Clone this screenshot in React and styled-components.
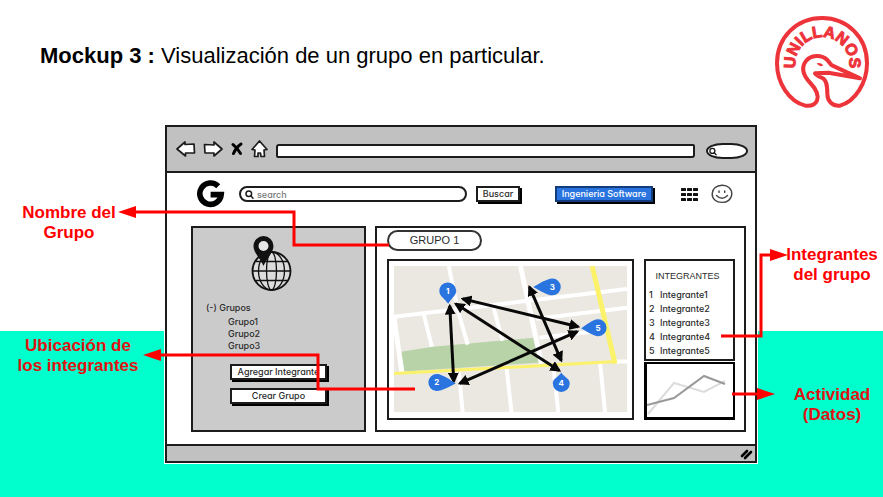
import React from 'react';
import styled, { createGlobalStyle } from 'styled-components';

const INK = '#1c1c1c';
const RED = '#ff0000';
const BLUE = '#2a74e0';

const GlobalStyle = createGlobalStyle`
  *, *::before, *::after { box-sizing: border-box; }
  body { margin: 0; background: #fff; font-family: 'Liberation Sans', Arial, sans-serif; }
  svg { display: block; flex: none; }
`;

const Slide = styled.main`
  min-height: 100vh;
  background: linear-gradient(#fff 0 66.6%, #00ffcc 66.6%);
`;

const Header = styled.header`
  display: flex;
  align-items: center;
  justify-content: space-between;
  padding-left: 40px;
`;

const Title = styled.h1`
  margin: 0;
  padding-bottom: 8px;
  font-size: 22px;
  line-height: 28px;
  font-weight: 400;
  color: #000;
`;

const Stage = styled.section`
  position: relative;
  display: grid;
  grid-template-columns: 164px minmax(0, 1fr) 125px;
  align-items: start;
  margin-top: 4px;
`;

const Notes = styled.div`
  display: flex;
  flex-direction: column;
  gap: ${(p) => (p.$side === 'left' ? 93 : 100)}px;
  padding-top: ${(p) => (p.$side === 'left' ? 79 : 121)}px;
  padding-left: ${(p) => (p.$side === 'left' ? 0 : 23)}px;
`;

const Note = styled.p`
  margin: 0;
  padding-right: ${(p) => p.$inset || 0}px;
  text-align: center;
  font-size: 17px;
  line-height: 20px;
  font-weight: 700;
  color: ${(p) => (p.$onTeal ? '#e01212' : RED)};
`;

const Connectors = styled.svg`
  position: absolute;
  top: 0;
  ${(p) => p.$side}: 0;
  pointer-events: none;
  fill: none;
  stroke: ${RED};
  stroke-width: 3;
`;

const Browser = styled.div`
  padding: 1px;
  background: #fff;
`;

const Frame = styled.div`
  border: 2px solid ${INK};
  color: #2b2b2b;
  font-family: Inter, 'Liberation Sans', sans-serif;
  font-feature-settings: 'cv11';
  font-size: 9px;
  font-weight: 500;
`;

const Toolbar = styled.div`
  display: flex;
  align-items: center;
  gap: 8px;
  height: 46px;
  padding: 4px 7px 0 9px;
  background: #c1c1c1;
  border-bottom: 2px solid ${INK};
`;

const ToolbarIcons = styled.div`
  display: flex;
  align-items: center;
  gap: 7px;
  padding-bottom: 4px;
`;

const IconButton = styled.button`
  display: flex;
  padding: 0;
  border: 0;
  background: none;
  color: #000;
`;

const AddressInput = styled.input`
  flex: 1;
  min-width: 0;
  height: 14px;
  padding: 0 4px;
  border: 2px solid ${INK};
  border-radius: 3px 2px 3px 2px;
  background: #fff;
  font: inherit;
`;

const Field = styled.label`
  display: flex;
  align-items: center;
  gap: 3px;
  height: 16px;
  border: 2px solid ${INK};
  border-radius: 12px;
  background: #fff;
  overflow: hidden;
  ${(p) => (p.$wide
    ? 'flex: 1; min-width: 0; padding: 0 6px 0 4px; margin-right: 9px;'
    : 'width: 42px; margin-left: 3px; padding-left: 1px; border-radius: 40% / 50%;')}
`;

const FieldInput = styled.input`
  flex: 1;
  width: 0;
  min-width: 0;
  padding: 0;
  border: 0;
  outline: 0;
  background: transparent;
  font: inherit;
  font-feature-settings: inherit;
  &::placeholder { color: #777; opacity: 1; }
`;

const Content = styled.div`
  padding: 0 9px 12px 24px;
`;

const Nav = styled.div`
  display: flex;
  align-items: center;
  height: 42px;
  padding: 0 13px 0 5px;
  margin-bottom: 11px;
`;

const Brand = styled.a`
  margin-right: 14px;
  color: #000;
`;

const SketchButton = styled.button`
  height: 16px;
  padding: 0;
  width: ${(p) => p.$width || '100%'};
  border: 2px solid ${(p) => (p.$primary ? '#123c7c' : INK)};
  background: ${(p) => (p.$primary ? BLUE : '#fff')};
  color: ${(p) => (p.$primary ? '#fff' : 'inherit')};
  box-shadow: 2px 2px 0 #000;
  font: inherit;
  font-feature-settings: inherit;
  line-height: 12px;
  white-space: nowrap;
`;

const NavTools = styled.div`
  display: flex;
  align-items: center;
  gap: 13px;
  padding-left: 28px;
`;

const NavSpacer = styled.div`
  width: 35px;
`;

const Panels = styled.div`
  display: grid;
  grid-template-columns: 175px minmax(0, 1fr);
  gap: 9px;
`;

const Sidebar = styled.aside`
  display: flex;
  flex-direction: column;
  padding: 7px 37px 26px 13px;
  border: 2px solid ${INK};
  background: #cbcbcb;
`;

const GlobeBox = styled.div`
  padding-left: 42px;
  margin-bottom: 9px;
`;

const TreeTitle = styled.div`
  line-height: 12px;
  margin-bottom: 2px;
`;

const Tree = styled.ul`
  margin: 0 0 12px;
  padding: 0 0 0 22px;
  list-style: none;
  line-height: 12px;
`;

const Actions = styled.div`
  display: flex;
  flex-direction: column;
  gap: 8px;
  padding-left: 24px;
`;

const GroupPanel = styled.section`
  padding: 2px 9px 8px 10px;
  border: 2px solid ${INK};
`;

const GroupName = styled.h2`
  width: 95px;
  margin: 0 0 8px;
  border: 2px solid #333;
  border-radius: 12px;
  text-align: center;
  font: 400 11px/17px 'Liberation Sans', Arial, sans-serif;
`;

const GroupBody = styled.div`
  display: grid;
  grid-template-columns: minmax(0, 1fr) 91px;
  gap: 10px;
`;

const MapFrame = styled.div`
  padding: 5px;
  border: 2px solid ${INK};
`;

const MapDrawing = styled.svg`
  width: 100%;
  height: auto;
`;

const SideStack = styled.div`
  display: flex;
  flex-direction: column;
  gap: 1px;
`;

const Members = styled.div`
  padding: 8px 3px 1px;
  border: 2px solid ${INK};
`;

const MembersTitle = styled.h3`
  margin: 0 0 5px;
  padding-right: 4px;
  text-align: center;
  font: 400 9px/14px 'Liberation Sans', Arial, sans-serif;
`;

const MemberList = styled.ol`
  margin: 0;
  padding: 0;
  list-style: none;
`;

const Member = styled.li`
  display: grid;
  grid-template-columns: 11px 1fr;
  line-height: 14px;
`;

const ChartBox = styled.div`
  flex: 1;
  border: 2px solid #000;
  border-width: 2px 2px 3px 3px;
`;

const Footer = styled.div`
  display: flex;
  align-items: center;
  justify-content: flex-end;
  height: 17px;
  padding-right: 1px;
  background: #c1c1c1;
  border-top: 2px solid ${INK};
`;

const UniversityLogo = () => (
  <svg width="123" height="120" viewBox="0 0 369 360" role="img" aria-label="Unillanos">
    <defs>
      <path id="logo-arc" d="M107 205 A81 81 0 1 1 267 205" />
    </defs>
    <g fill="none" stroke="#ee343b" strokeWidth="12" strokeLinejoin="round">
      <path d="M136 317 C86 304 51 248 51 190 C51 112 110 54 186 54 C262 54 321 112 321 190 C321 248 286 304 240 317 C217 319 202 303 202 282 C202 258 200 240 187 234 C178 230 169 226 165 220 L205 218 L300 235 L216 196 C210 192 208 186 202 180 C185 163 152 164 137 184 C121 207 133 230 151 249 C168 267 177 285 171 302 C165 315 152 319 136 317 Z" />
    </g>
    <path d="M170 190 Q181 186 190 196 Q179 204 170 190Z" fill="#ee343b" />
    <text fill="#ee343b" stroke="#ee343b" strokeWidth="3" fontFamily="'Liberation Sans Narrow', 'Liberation Sans', Arial, sans-serif" fontWeight="700" fontSize="48" textAnchor="middle">
      <textPath href="#logo-arc" startOffset="50%">UNILLANOS</textPath>
    </text>
  </svg>
);

const Arrow = ({ flip }) => (
  <svg width="20" height="18" viewBox="0 0 20 18" fill="#fff" stroke="#1c1c1c" strokeWidth="1.7" strokeLinejoin="round">
    <path d={flip ? 'M19 9 L11 2 L11 5 L1.5 4.5 L2 13 L11 13 L11 16 Z' : 'M1 9 L9 2 L9 4.5 L18 4 L18.5 13 L9.5 13 L9.5 16 Z'} />
  </svg>
);

const Cross = () => (
  <svg width="14" height="14" viewBox="0 0 14 14" fill="none" stroke="#000" strokeWidth="3" strokeLinecap="round">
    <path d="M3 2.5 L7 6.5 L10.5 11.5 M11 2 C8 4 5 8 3.5 11.5" />
  </svg>
);

const Home = () => (
  <svg width="17" height="18" viewBox="0 0 17 18" fill="#fff" stroke="#1c1c1c" strokeWidth="1.7" strokeLinejoin="round">
    <path d="M8.5 1 L16 9.5 L13 10 L13.5 16.5 L10 16.5 L9.5 13 L7 13 L7 16.5 L3.5 16.5 L4 10 L1 9.5 Z" />
  </svg>
);

const Magnifier = ({ small }) => (
  <svg width={small ? 8 : 9} height="9" viewBox="0 0 9 9" fill="none" stroke="#1c1c1c" strokeWidth="1.5" strokeLinecap="round">
    <circle cx="3.8" cy="3.8" r="2.8" />
    <path d="M6 6 L8 8.2" />
  </svg>
);

const GLogo = () => (
  <svg width="29" height="28" viewBox="0 0 29 28" fill="none" stroke="#000" strokeWidth="5.6">
    <path d="M22.2 6.2 A10.7 10.7 0 1 0 25.2 14.6 H14.6" />
  </svg>
);

const AppsGrid = () => (
  <svg width="17" height="13" viewBox="0 0 17 13" fill="#111">
    {[0, 5, 10].map((y) => [0, 6, 12].map((x) => (
      <rect key={`${x}-${y}`} x={x} y={y} width="5" height="3" rx="0.5" />
    )))}
  </svg>
);

const Smiley = () => (
  <svg width="22" height="20" viewBox="0 0 22 20" fill="none" stroke="#444" strokeWidth="1.4" strokeLinecap="round">
    <path d="M11 1.2 C17 1 21 5 20.8 10 C20.5 15.5 16 18.6 11 18.4 C5 18.2 1 15 1.2 9.5 C1.5 4.5 5.5 1.5 11 1.2Z" />
    <path d="M5.5 11.5 Q11 17 16.5 11.5 M8 7 V8.4 M13.7 7 V8.4" />
  </svg>
);

const Globe = () => (
  <svg width="44" height="58" viewBox="0 0 44 58" fill="none" stroke="#111" strokeWidth="1.3">
    <circle cx="23.5" cy="36" r="19" fill="#dcdcdc" strokeWidth="1.8" />
    <ellipse cx="23.5" cy="36" rx="13" ry="19" />
    <ellipse cx="23.5" cy="36" rx="5" ry="19" />
    <path d="M4.5 36 H42.5 M8 26.5 H39 M8 45.5 H39" />
    <path d="M15.5 31 C13 24 5.5 18 5.5 11 A10 10 0 0 1 25.5 11 C25.5 18 18 24 15.5 31Z" fill="#111" stroke="none" />
    <circle cx="15.5" cy="11" r="5" fill="#e6e6e6" stroke="none" />
  </svg>
);

const pins = [
  { n: 1, x: 448, y: 291, tip: 13, angle: 88 },
  { n: 2, x: 437, y: 383, tip: 19, angle: 3 },
  { n: 3, x: 553, y: 287, tip: 19, angle: 180 },
  { n: 4, x: 562, y: 384, tip: 11, angle: 270 },
  { n: 5, x: 599, y: 328, tip: 17, angle: 178 },
];

const links = [
  'M450 306 L454 382',
  'M463 299 L579 327',
  'M456 304 L560 371',
  'M460 384 L578 332',
  'M530 287 L562 361',
];

const GroupMap = () => (
  <MapDrawing viewBox="394 266 234 147" role="img" aria-label="Mapa del grupo">
    <defs>
      <marker id="link-head" viewBox="0 0 10 10" refX="8" refY="5" markerWidth="11" markerHeight="11" markerUnits="userSpaceOnUse" orient="auto-start-reverse">
        <path d="M0 0 L10 5 L0 10Z" fill="#080808" />
      </marker>
    </defs>
    <rect x="394" y="266" width="234" height="147" fill="#ebe8e1" />
    <path d="M401 352 L433 347 L535 338 L542 363 L404 372Z" fill="#b9d3a9" />
    <g fill="none" stroke="#fff" strokeWidth="4">
      <path d="M394 317 L520 302 L628 289" />
      <path d="M537 319 L628 308 M540 338 L610 330 M617 362 H628" />
      <path d="M449 266 L458 310 L468 345 M424 315 L432 347 M494 308 L503 341" />
      <path d="M394 318 L402 373" strokeWidth="5" />
      <path d="M521 266 L542 364" strokeWidth="5" />
      <path d="M459 372 L463 413 M507 368 L512 413 M554 366 L559 413 M601 364 L606 413" />
    </g>
    <path d="M394 374 L617 362" stroke="#fbf26a" strokeWidth="3" />
    <path d="M593 266 L616 364" stroke="#fbf26a" strokeWidth="5" />
    <g fill="none" stroke="#080808" strokeWidth="3">
      {links.map((d) => (
        <path key={d} d={d} markerStart="url(#link-head)" markerEnd="url(#link-head)" />
      ))}
    </g>
    {pins.map((p) => (
      <g key={p.n} transform={`translate(${p.x} ${p.y})`}>
        <path
          transform={`rotate(${p.angle})`}
          d={`M${p.tip} 0 C${p.tip - 5} -3 5 -8.5 0 -8.5 A8.5 8.5 0 1 0 0 8.5 C5 8.5 ${p.tip - 5} 3 ${p.tip} 0Z`}
          fill={BLUE}
        />
        <text y="3" textAnchor="middle" fill="#fff" fontSize="8" fontWeight="700" fontFamily="Inter, sans-serif">{p.n}</text>
      </g>
    ))}
  </MapDrawing>
);

const ActivityChart = () => (
  <svg width="100%" height="100%" viewBox="0 0 86 53" preserveAspectRatio="none" fill="none" strokeWidth="2" role="img" aria-label="Actividad">
    <path d="M1 50 L27 19 L57 28 L78 17" stroke="#dcdcdc" />
    <path d="M0 41 L27 34 L57 12 L78 20" stroke="#999" />
  </svg>
);

const Grip = () => (
  <svg width="14" height="12" viewBox="0 0 14 12" fill="none" stroke="#000" strokeWidth="2.6" strokeLinecap="round">
    <path d="M2 8 L7 3 M5 10 L11 4" />
  </svg>
);

const members = ['Integrante1', 'Integrante2', 'Integrante3', 'Integrante4', 'Integrante5'];
const groups = ['Grupo1', 'Grupo2', 'Grupo3'];

export default function App() {
  return (
    <Slide>
      <GlobalStyle />
      <Header>
        <Title><strong>Mockup 3 :</strong> Visualización de un grupo en particular.</Title>
        <UniversityLogo />
      </Header>
      <Stage>
        <Notes $side="left">
          <Note $inset={26}>Nombre del<br />Grupo</Note>
          <Note $inset={8} $onTeal>Ubicación de<br />los integrantes</Note>
        </Notes>

        <Browser>
          <Frame>
            <Toolbar>
              <ToolbarIcons>
                <IconButton aria-label="Atrás"><Arrow /></IconButton>
                <IconButton aria-label="Adelante"><Arrow flip /></IconButton>
                <IconButton aria-label="Detener"><Cross /></IconButton>
                <IconButton aria-label="Inicio"><Home /></IconButton>
              </ToolbarIcons>
              <AddressInput aria-label="Dirección" />
              <Field>
                <Magnifier small />
                <FieldInput aria-label="Buscar en la web" />
              </Field>
            </Toolbar>
            <Content>
              <Nav>
                <Brand href="#" aria-label="Inicio"><GLogo /></Brand>
                <Field $wide>
                  <Magnifier />
                  <FieldInput placeholder="search" aria-label="search" />
                </Field>
                <SketchButton $width="44px">Buscar</SketchButton>
                <NavSpacer />
                <SketchButton $primary $width="98px">Ingenieria Software</SketchButton>
                <NavTools>
                  <IconButton aria-label="Aplicaciones"><AppsGrid /></IconButton>
                  <IconButton aria-label="Perfil"><Smiley /></IconButton>
                </NavTools>
              </Nav>
              <Panels>
                <Sidebar>
                  <GlobeBox><Globe /></GlobeBox>
                  <TreeTitle>(-) Grupos</TreeTitle>
                  <Tree>
                    {groups.map((g) => <li key={g}>{g}</li>)}
                  </Tree>
                  <Actions>
                    <SketchButton>Agregar Integrante</SketchButton>
                    <SketchButton>Crear Grupo</SketchButton>
                  </Actions>
                </Sidebar>
                <GroupPanel>
                  <GroupName>GRUPO 1</GroupName>
                  <GroupBody>
                    <MapFrame><GroupMap /></MapFrame>
                    <SideStack>
                      <Members>
                        <MembersTitle>INTEGRANTES</MembersTitle>
                        <MemberList>
                          {members.map((m, i) => (
                            <Member key={m}><span>{i + 1}</span><span>{m}</span></Member>
                          ))}
                        </MemberList>
                      </Members>
                      <ChartBox><ActivityChart /></ChartBox>
                    </SideStack>
                  </GroupBody>
                </GroupPanel>
              </Panels>
            </Content>
            <Footer><Grip /></Footer>
          </Frame>
        </Browser>

        <Notes $side="right">
          <Note>Integrantes<br />del grupo</Note>
          <Note $onTeal>Actividad<br />(Datos)</Note>
        </Notes>

        <Connectors $side="left" width="430" height="300" viewBox="0 124 430 300">
          <path d="M134 212 H294 V245 H389" />
          <path d="M159 355 H318 V389 H415" />
          <path d="M118 212 L136 206 V218Z M143 355 L161 349 V361Z" fill={RED} stroke="none" />
        </Connectors>
        <Connectors $side="right" width="170" height="300" viewBox="713 124 170 300">
          <path d="M721 336 H761 V255 H772" />
          <path d="M732 394 H759" />
          <path d="M788 255 L770 249 V261Z M775 394 L757 388 V400Z" fill={RED} stroke="none" />
        </Connectors>
      </Stage>
    </Slide>
  );
}
